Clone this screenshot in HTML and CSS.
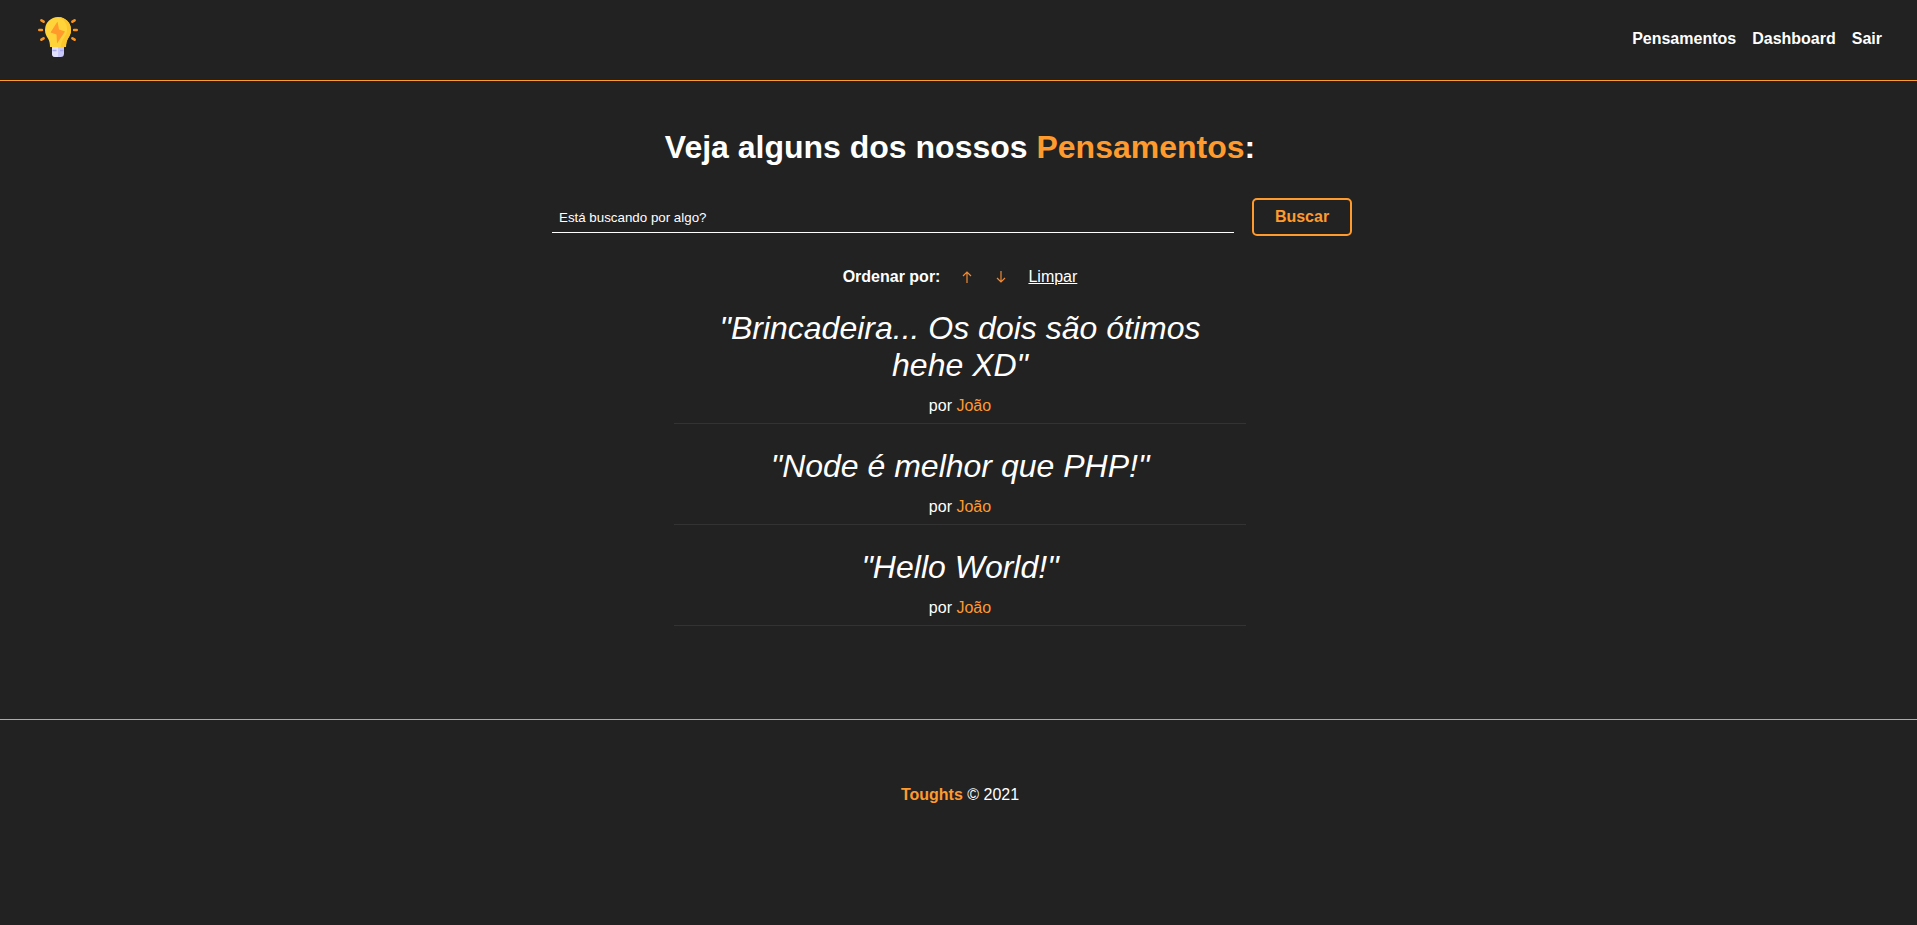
FILE: index.html
```html
<!DOCTYPE html>
<html lang="pt-br">
<head>
<meta charset="utf-8">
<title>Toughts</title>
<link rel="stylesheet" href="styles.css">
</head>
<body>
<header class="navbar">
  <a class="logo" href="#" aria-label="Toughts">
    <svg viewBox="0 0 40 40" width="40" height="40" aria-hidden="true">
      <g stroke="#f7931e" stroke-width="2.6" stroke-linecap="round">
        <path d="M3.4 3.3l2.2 1.400M36.600 3.300l-2.200 1.400M1.300 13h2.600M36.100 13h2.600M3.400 22.700l2.200-1.400M36.600 22.700l-2.200-1.400"/>
      </g>
      <path fill="#c8c8fa" d="M14 29h12v7.500q0 3.500-3.500 3.500h-5q-3.500 0-3.500-3.500z"/>
      <path fill="#e1e1fc" d="M14 29h6v11h-2.500q-3.500 0-3.500-3.500z"/>
      <path stroke="#a9a9ec" stroke-width="1.500" d="M14.500 33.500h4M22 33.500h3.500"/>
      <path fill="#ffd43b" d="M20 0a13 13 0 0 0-13 13c0 4 1.500 6 3 8.500 1.400 2.400 2 5 2 8.500h16c0-3.500.6-6 2-8.500 1.500-2.500 3-4.500 3-8.500A13 13 0 0 0 20 0z"/>
      <path fill="#fdc52c" d="M20 0a13 13 0 0 1 13 13c0 4-1.500 6-3 8.500-1.400 2.400-2 5-2 8.500h-5c0-4 1-6.500 3-9.500 2-2.800 3-5 3-8.500C29 6 25 1.500 20 0z"/>
      <path fill="#ff9a2b" d="M19.500 4.500L12.500 15.500l6 2L19 26.500l8-12-6-2z"/>
    </svg>
  </a>
  <nav class="links">
    <a href="#">Pensamentos</a>
    <a href="#">Dashboard</a>
    <a href="#">Sair</a>
  </nav>
</header>
<main class="content">
  <h1 class="title">Veja alguns dos nossos <span class="accent">Pensamentos</span>:</h1>
  <form class="search">
    <input class="search-input" type="text" aria-label="Buscar pensamentos" placeholder="Está buscando por algo?">
    <button class="search-button" type="button">Buscar</button>
  </form>
  <div class="order">
    <span class="order-label">Ordenar por:</span>
    <button class="arrow" type="button" aria-label="Mais antigos">
      <svg viewBox="0 0 10 12" width="10" height="12" aria-hidden="true"><path d="M5 12V1M1 5l4-4 4 4"/></svg>
    </button>
    <button class="arrow" type="button" aria-label="Mais recentes">
      <svg viewBox="0 0 10 12" width="10" height="12" aria-hidden="true"><path d="M5 0v11M1 7l4 4 4-4"/></svg>
    </button>
    <a class="clear" href="#">Limpar</a>
  </div>
  <ul class="thoughts">
    <li class="thought">
      <p class="quote">"Brincadeira... Os dois são ótimos hehe XD"</p>
      <p class="author">por <span class="accent">João</span></p>
    </li>
    <li class="thought">
      <p class="quote">"Node é melhor que PHP!"</p>
      <p class="author">por <span class="accent">João</span></p>
    </li>
    <li class="thought">
      <p class="quote">"Hello World!"</p>
      <p class="author">por <span class="accent">João</span></p>
    </li>
  </ul>
</main>
<footer class="footer">
  <p class="copy"><strong class="accent">Toughts</strong> © 2021</p>
</footer>
</body>
</html>
```
FILE: styles.css
```css
* {
  box-sizing: border-box;
  margin: 0;
  padding: 0;
}

body {
  background: #222;
  color: #fff;
  font: 16px/18px "Liberation Sans", Arial, sans-serif;
}

.accent {
  color: #ff9a2e;
}

.navbar {
  display: flex;
  justify-content: space-between;
  align-items: center;
  padding: 17px 35px 23px 38px;
  border-bottom: 1px solid #ff9a2e;
}

.logo svg {
  display: block;
}

.links {
  display: flex;
  gap: 16px;
  padding-top: 3px;
}

.links a {
  color: #fff;
  font-weight: bold;
  text-decoration: none;
}

.content {
  display: flex;
  flex-direction: column;
  align-items: center;
  padding: 48px 32px 93px 35px;
}

.title {
  font-size: 32px;
  line-height: 37px;
  text-align: center;
}

.search {
  display: flex;
  align-items: flex-start;
  gap: 18px;
  width: 100%;
  max-width: 816px;
  padding-right: 16px;
  margin-top: 32px;
}

.search-input {
  flex: 1;
  min-width: 0;
  height: 35px;
  padding: 5px 7px 0;
  border: 0;
  border-bottom: 1px solid #fff;
  background: transparent;
  color: #fff;
  font-family: "Liberation Sans", Arial, sans-serif;
}

.search-input::placeholder {
  color: #fff;
}

.search-button {
  width: 100px;
  height: 38px;
  border: 2px solid #ff9a2e;
  border-radius: 5px;
  background: transparent;
  color: #ff9a2e;
  font: bold 16px "Liberation Sans", Arial, sans-serif;
}

.order {
  display: flex;
  align-items: center;
  margin-top: 32px;
}

.order-label {
  font-weight: bold;
  margin-right: 10px;
}

.arrow {
  display: flex;
  justify-content: center;
  align-items: flex-end;
  width: 34px;
  height: 18px;
  padding-bottom: 3px;
  border: 0;
  background: transparent;
}

.arrow svg {
  fill: none;
  stroke: #f08a35;
  stroke-width: 1.2;
}

.clear {
  margin-left: 10px;
  color: #fff;
}

.thoughts {
  width: 100%;
  max-width: 572px;
  list-style: none;
}

.thought {
  padding: 24px 32px 8px;
  border-bottom: 1px solid #333;
  text-align: center;
}

.quote {
  margin-bottom: 13px;
  font-size: 32px;
  font-style: italic;
  line-height: 37px;
}

.footer {
  padding: 66px 32px 66px 35px;
  border-top: 1px solid #ff9a2e;
  text-align: center;
}
```
